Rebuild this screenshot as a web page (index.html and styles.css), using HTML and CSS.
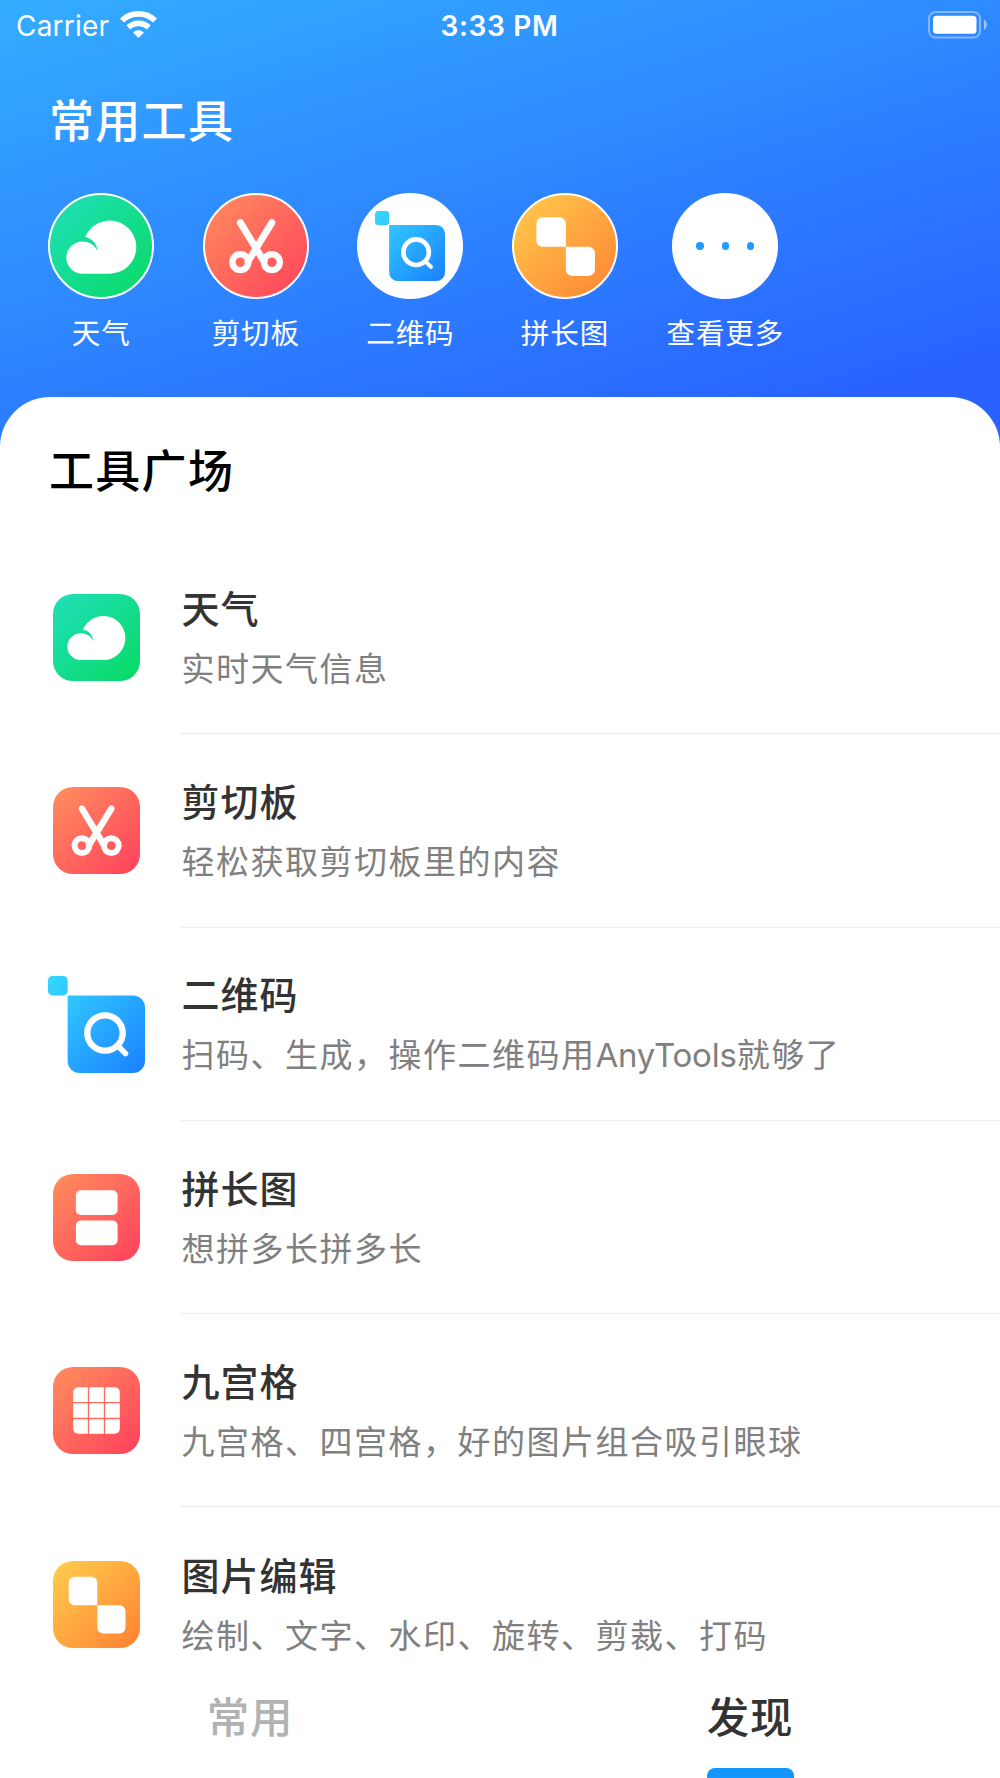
FILE: index.html
```
<!DOCTYPE html>
<html lang="zh-CN">
<head>
    <meta charset="UTF-8">
    <meta name="viewport" content="width=device-width, initial-scale=1.0">
    <title>AnyTools</title>
    <link rel="stylesheet" href="styles.css">
</head>
<body>
    <!-- shared icon shapes -->
    <svg class="defs" width="0" height="0">
        <linearGradient id="blue" gradientUnits="userSpaceOnUse" x1="0" y1="0" x2="97" y2="97">
            <stop offset="0" stop-color="#36d9ff"/>
            <stop offset="1" stop-color="#1a80ff"/>
        </linearGradient>
        <symbol id="cloud" viewBox="0 0 97 97">
            <path fill="#fff" d="M35 40.6A22 22 0 1 1 55.5 71H32.7A13.3 13.3 0 1 1 32.7 44.3C38.5 44.3 43.5 47.5 45 52.3C45 46.5 41 42 35 40.6Z"/>
        </symbol>
        <symbol id="scissors" viewBox="0 0 97 97">
            <g fill="none" stroke="#fff" stroke-linecap="round">
                <path stroke-width="6.4" d="M33.9 26.7L56 63M63.3 26.7L41 63"/>
                <circle cx="33.9" cy="63.6" r="7.4" stroke-width="5.9"/>
                <circle cx="63.3" cy="63.6" r="7.4" stroke-width="5.9"/>
            </g>
        </symbol>
        <symbol id="qrcode" viewBox="0 0 97 97">
            <rect width="19.6" height="19.4" rx="4.5" fill="url(#blue)"/>
            <path fill="url(#blue)" d="M19.6 19.4H85A12 12 0 0 1 97 31.4V85A12 12 0 0 1 85 97H31.6A12 12 0 0 1 19.6 85Z"/>
            <circle cx="57" cy="57" r="17.7" fill="none" stroke="#fff" stroke-width="6.3"/>
            <path d="M69.5 69.5L77.5 77.5" stroke="#fff" stroke-width="5.6" stroke-linecap="round"/>
        </symbol>
        <symbol id="long" viewBox="0 0 97 97">
            <rect x="27.9" y="21.3" width="41.7" height="24.7" rx="5" fill="#fff"/>
            <rect x="27.9" y="51.5" width="41.7" height="24.7" rx="5" fill="#fff"/>
        </symbol>
        <symbol id="grid" viewBox="0 0 97 97">
            <rect x="25.2" y="25.2" width="46.6" height="46.6" rx="5" fill="#fff"/>
            <path d="M40.5 25V72M56.5 25V72M25 40.7H72M25 56.5H72" stroke="#ff6b5e" stroke-width="1.3"/>
        </symbol>
        <symbol id="edit" viewBox="0 0 97 97">
            <path fill="#fff" d="M26.7 20.7H43.3A6 6 0 0 1 49.3 26.7V49.3H26.7A6 6 0 0 1 20.7 43.3V26.7A6 6 0 0 1 26.7 20.7Z"/>
            <path fill="#fff" d="M49.3 49.3H71.5A6 6 0 0 1 77.5 55.3V71.5A6 6 0 0 1 71.5 77.5H55.3A6 6 0 0 1 49.3 71.5Z"/>
        </symbol>
    </svg>

    <div class="app">
        <header class="header">
            <div class="status-bar">
                <div class="carrier">
                    <span>Carrier</span>
                    <svg class="wifi" viewBox="0 0 37 27">
                        <g fill="none" stroke="#fff">
                            <path stroke-width="5.8" d="M2 9.5A24 24 0 0 1 35 9.5"/>
                            <path stroke-width="5.6" d="M8.3 16.4A15 15 0 0 1 28.7 16.4"/>
                        </g>
                        <path fill="#fff" d="M18.5 27L13 21.4A8 8 0 0 1 24 21.4Z"/>
                    </svg>
                </div>
                <div class="time">3:33 PM</div>
                <svg class="battery" viewBox="0 0 60 28">
                    <rect x="1" y="1" width="51" height="25.5" rx="6.5" fill="none" stroke="#fff" stroke-opacity=".4" stroke-width="2"/>
                    <rect x="5" y="4.8" width="43.5" height="18" rx="3.5" fill="#fff"/>
                    <path d="M56 8.5Q59 10.500 59 13.7T56 19Z" fill="#fff" fill-opacity=".5"/>
                </svg>
            </div>
            <h1 class="title">常用工具</h1>
            <div class="shortcuts">
                <div class="shortcut">
                    <div class="circle green"><svg class="glyph-cloud"><use href="#cloud"/></svg></div>
                    <span>天气</span>
                </div>
                <div class="shortcut">
                    <div class="circle red"><svg class="glyph-scissors"><use href="#scissors"/></svg></div>
                    <span>剪切板</span>
                </div>
                <div class="shortcut">
                    <div class="circle"><svg class="glyph-qrcode"><use href="#qrcode"/></svg></div>
                    <span>二维码</span>
                </div>
                <div class="shortcut">
                    <div class="circle orange"><svg class="glyph-edit"><use href="#edit"/></svg></div>
                    <span>拼长图</span>
                </div>
                <div class="shortcut">
                    <div class="circle more"><i></i><i></i><i></i></div>
                    <span>查看更多</span>
                </div>
            </div>
        </header>

        <main class="panel">
            <h2 class="title">工具广场</h2>
            <div class="list">
                <div class="row">
                    <div class="icon"><div class="tile green"></div><svg><use href="#cloud"/></svg></div>
                    <div class="info">
                        <h3>天气</h3>
                        <p>实时天气信息</p>
                    </div>
                </div>
                <div class="row">
                    <div class="icon"><div class="tile red"></div><svg><use href="#scissors"/></svg></div>
                    <div class="info">
                        <h3>剪切板</h3>
                        <p>轻松获取剪切板里的内容</p>
                    </div>
                </div>
                <div class="row">
                    <div class="icon"><svg><use href="#qrcode"/></svg></div>
                    <div class="info">
                        <h3>二维码</h3>
                        <p>扫码、生成，操作二维码用<span class="latin">AnyTools</span>就够了</p>
                    </div>
                </div>
                <div class="row">
                    <div class="icon"><div class="tile red"></div><svg><use href="#long"/></svg></div>
                    <div class="info">
                        <h3>拼长图</h3>
                        <p>想拼多长拼多长</p>
                    </div>
                </div>
                <div class="row">
                    <div class="icon"><div class="tile red"></div><svg><use href="#grid"/></svg></div>
                    <div class="info">
                        <h3>九宫格</h3>
                        <p>九宫格、四宫格，好的图片组合吸引眼球</p>
                    </div>
                </div>
                <div class="row">
                    <div class="icon"><div class="tile orange"></div><svg><use href="#edit"/></svg></div>
                    <div class="info">
                        <h3>图片编辑</h3>
                        <p>绘制、文字、水印、旋转、剪裁、打码</p>
                    </div>
                </div>
            </div>
        </main>

        <nav class="tabs">
            <div class="tab">常用</div>
            <div class="tab active">发现</div>
        </nav>
    </div>
</body>
</html>
```
FILE: styles.css
```
* {
    box-sizing: border-box;
}
body {
    margin: 0;
    background-color: #fff;
    font-family: "Noto Sans CJK SC", sans-serif;
}
h1, h2, h3, p {
    margin: 0;
}
.defs {
    position: absolute;
}
.app {
    display: flex;
    flex-direction: column;
    width: 1000px;
    height: 1778px;
    overflow: hidden;
}

/* header */
.header {
    flex: none;
    height: 445px;
    color: #fff;
    background: linear-gradient(163deg, #33adff 0%, #2962ff 88%);
}
.status-bar {
    display: grid;
    grid-template-columns: 1fr auto 1fr;
    align-items: center;
    height: 50px;
    padding: 0 12px 0 16px;
    font-family: Inter, sans-serif;
    font-size: 28px;
}
.carrier {
    display: flex;
    align-items: center;
    gap: 11px;
    padding-top: 2px;
    letter-spacing: 0.2px;
}
.wifi {
    width: 37px;
    height: 27px;
    margin-top: -4px;
}
.time {
    padding: 2px 5px 0 0;
    font-weight: 600;
    letter-spacing: 0.7px;
}
.battery {
    justify-self: end;
    width: 60px;
    height: 28px;
    margin-top: -1px;
}
.title {
    font-size: 45px;
    font-weight: 500;
    line-height: 60px;
    letter-spacing: 1.3px;
    padding-left: 49px;
}
.header .title {
    margin-top: 39px;
}
.shortcuts {
    display: flex;
    gap: 48.6px;
    padding: 44px 0 0 48.2px;
}
.shortcut {
    display: flex;
    flex-direction: column;
    align-items: center;
    min-width: 106px;
    font-size: 28.5px;
    font-weight: 400;
    line-height: 40px;
    letter-spacing: 0.9px;
}
.shortcut span {
    margin-top: 13px;
}
.circle {
    display: flex;
    align-items: center;
    justify-content: center;
    width: 106px;
    height: 106px;
    border: 2.5px solid #fff;
    border-radius: 50%;
    background-color: #fff;
}
.circle svg {
    flex: none;
}
.glyph-cloud {
    width: 117px;
    height: 117px;
}
.glyph-scissors {
    width: 104px;
    height: 104px;
}
.glyph-qrcode {
    width: 70px;
    height: 70px;
}
.glyph-edit {
    width: 100px;
    height: 100px;
}
.more {
    gap: 18px;
}
.more i {
    width: 7.4px;
    height: 7.4px;
    border-radius: 50%;
    background-color: #1e9cff;
}
.green {
    background: linear-gradient(135deg, #20dfbc, #08da62);
}
.red {
    background: linear-gradient(135deg, #ff8f5e, #ff405c);
}
.orange {
    background: linear-gradient(135deg, #ffce4d, #ff8133);
}
.circle.green, .circle.red, .circle.orange {
    background-origin: border-box;
}

/* tool list */
.panel {
    flex: 1;
    min-height: 0;
    margin-top: -48.5px;
    padding-top: 42px;
    border-radius: 50px 50px 0 0;
    background-color: #fff;
    overflow: hidden;
}
.panel .title {
    color: #000;
}
.list {
    padding-top: 42.5px;
}
.row {
    display: flex;
    align-items: center;
    height: 193.3px;
    padding-left: 48.4px;
}
.icon {
    display: grid;
    place-items: center;
    flex: none;
    width: 97px;
    height: 97px;
    margin-right: 36px;
}
.icon > * {
    grid-area: 1 / 1;
}
.icon svg {
    width: 97px;
    height: 97px;
}
.tile {
    width: 87px;
    height: 87px;
    border-radius: 20px;
}
.info {
    flex: 1;
    display: flex;
    flex-direction: column;
    justify-content: center;
    height: 100%;
    border-bottom: 1px solid #ececec;
}
.row:last-child .info {
    border-bottom: none;
}
.info h3 {
    color: #333;
    font-size: 38px;
    font-weight: 500;
    line-height: 60px;
    letter-spacing: 1px;
}
.info p {
    color: #808080;
    font-size: 33px;
    font-weight: 400;
    line-height: 60px;
    letter-spacing: 1.5px;
}
.info .latin {
    font-family: Inter, sans-serif;
    letter-spacing: -0.2px;
}

/* bottom tabs */
.tabs {
    flex: none;
    display: flex;
    height: 118px;
    background-color: #fff;
}
.tab {
    flex: 1;
    display: flex;
    flex-direction: column;
    align-items: center;
    justify-content: space-between;
    padding-top: 25px;
    color: #b2b2b2;
    font-size: 42.5px;
    font-weight: 500;
    line-height: 60px;
    letter-spacing: 0.8px;
}
.tab.active {
    color: #333;
}
.tab.active::after {
    content: "";
    width: 87px;
    height: 10px;
    border-radius: 8px 8px 0 0;
    background-color: #1496ff;
}
```
